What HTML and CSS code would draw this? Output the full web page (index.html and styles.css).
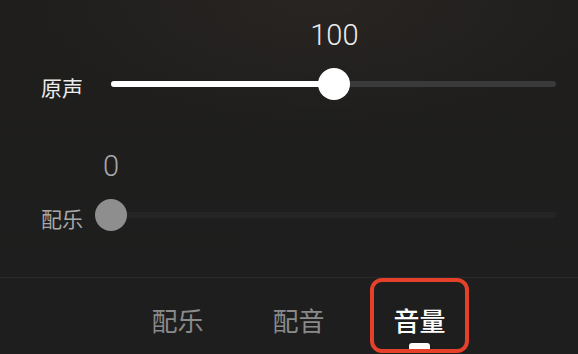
FILE: index.html
```html
<!DOCTYPE html>
<html lang="zh-CN">
<head>
<meta charset="utf-8">
<title>音量</title>
<link rel="stylesheet" href="styles.css">
</head>
<body>
<div class="screen">
  <section class="panel">
    <div class="row row-voice">
      <span class="label">原声</span>
      <div class="track track-voice">
        <div class="fill" style="width: 50.2%"></div>
        <div class="thumb thumb-on" style="left: 50.2%">
          <span class="value">100</span>
        </div>
      </div>
    </div>
    <div class="row row-music">
      <span class="label label-dim">配乐</span>
      <div class="track track-music">
        <div class="thumb thumb-off" style="left: 0%">
          <span class="value value-dim">0</span>
        </div>
      </div>
    </div>
  </section>
  <nav class="tabs">
    <div class="tab"><span class="tab-text">配乐</span></div>
    <div class="tab"><span class="tab-text">配音</span></div>
    <div class="tab tab-active"><span class="tab-text">音量</span><span class="indicator"></span></div>
  </nav>
</div>
</body>
</html>
```

FILE: styles.css
```css
* { box-sizing: border-box; }
html, body { margin: 0; padding: 0; }
body {
  width: 578px;
  height: 354px;
  overflow: hidden;
  background: #1e1e1e;
  font-family: "Noto Sans CJK SC", "Noto Sans", sans-serif;
}
.screen {
  width: 578px;
  height: 354px;
  display: flex;
  flex-direction: column;
  background:
    radial-gradient(ellipse 420px 180px at 320px 0px, rgba(48, 42, 38, 0.55), rgba(30, 30, 30, 0) 70%),
    linear-gradient(180deg, #1f1e1d 0%, #1e1e1e 100%);
}
.panel {
  height: 277px;
  flex: none;
  padding: 68px 22px 0 41px;
}
.row {
  display: flex;
  align-items: center;
  height: 32px;
}
.row-music { margin-top: 99px; }
.label {
  width: 70px;
  flex: none;
  font-size: 21px;
  line-height: 1;
  color: #ececec;
  padding-top: 6px;
}
.label-dim { color: #a8a8a8; }
.track {
  position: relative;
  flex: 1;
  height: 6px;
  border-radius: 3px;
}
.track-voice { background: #3a3a3a; }
.track-music { background: #252525; }
.fill {
  height: 100%;
  background: #ffffff;
  border-radius: 3px;
}
.thumb {
  position: absolute;
  top: 50%;
  width: 32px;
  height: 32px;
  margin: -16px 0 0 -16px;
  border-radius: 50%;
}
.thumb-on { background: #ffffff; }
.thumb-off { background: #8e8e8e; }
.value {
  position: absolute;
  left: 50%;
  bottom: calc(100% + 18px);
  transform: translateX(-50%);
  font-family: Roboto, "Noto Sans", sans-serif;
  font-size: 29px;
  font-weight: 300;
  line-height: 1;
  color: #ececec;
  white-space: nowrap;
}
.value-dim { color: #a8a8a8; }
.tabs {
  flex: 1;
  display: flex;
  gap: 22px;
  padding-left: 128px;
  border-top: 1px solid #2a2a2a;
}
.tab {
  width: 99px;
  height: 75px;
  display: flex;
  flex-direction: column;
  align-items: center;
  padding-top: 25px;
  border: 4px solid transparent;
  border-radius: 12px;
}
.tab-text {
  font-size: 26px;
  line-height: 1;
  color: #8a8a8a;
}
.tab-active { border-color: #e5402a; }
.tab-active .tab-text { color: #ffffff; font-weight: 500; }
.indicator {
  margin-top: auto;
  width: 21px;
  height: 6px;
  background: #ffffff;
  border-radius: 3px 3px 0 0;
}
```
